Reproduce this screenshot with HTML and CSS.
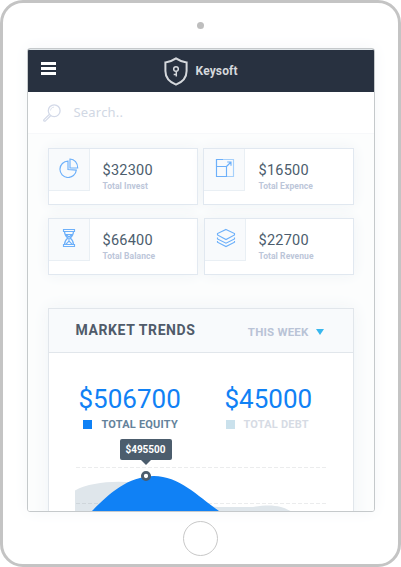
FILE: index.html
```html
<!DOCTYPE html>
<html lang="en">
<head>
<meta charset="utf-8">
<title>Keysoft</title>
<link rel="stylesheet" href="styles.css">
</head>
<body>
<div class="tablet">
  <div class="camera"></div>
  <main class="screen">
    <header class="topbar">
      <div class="menu"><i></i><i></i><i></i></div>
      <div class="brand">
        <svg width="24" height="29" viewBox="0 0 24 29" fill="none" stroke="#d5d8dc" stroke-width="2">
          <path d="M12 1.4C9 3.5 5.5 4.9 1.4 5.4V14c0 6 4 11 10.6 13.6C18.600 25 22.600 20 22.600 14V5.400C18.500 4.900 15 3.500 12 1.400Z"/>
          <circle cx="12" cy="12" r="2.300" stroke-width="1.500"/>
          <path d="M12.300 14.300V19.500M12.300 17.400H9.700" stroke-width="1.500"/>
        </svg>
        <span>Keysoft</span>
      </div>
    </header>
    <div class="search">
      <svg width="18" height="18" viewBox="0 0 18 18" fill="none" stroke="#d3d9e8">
        <circle cx="11.200" cy="6.700" r="5.900" stroke-width="1.300"/>
        <path d="M7.500 6.500C7.700 4.500 9 3.300 11 3.100" stroke-width=".8"/>
        <path d="M6.500 10.200L1 15.600C.2 16.800 1.300 17.700 2.500 16.900L7.900 11.500" stroke-width="1.200"/>
      </svg>
      <span>Search..</span>
    </div>
    <div class="content">
      <section class="stats">
        <article class="stat">
          <div class="tile"><svg width="20" height="20" viewBox="0 0 20 20"><path d="M9 3.100A8.200 8.200 0 1 0 17.300 12.100L9 11.500Z"/><path d="M11 1V10H18.700C18.700 4.900 15.500 1.200 11 1Z"/></svg></div>
          <div class="figures"><b>$32300</b><small>Total Invest</small></div>
        </article>
        <article class="stat expense">
          <div class="tile"><svg width="20" height="20" viewBox="0 0 20 20"><path class="faint" d="M1.500 8.500V1.500H18.500V18.500H12"/><path d="M1.500 8.500H11.500V18.500H1.500ZM1.500 8.500V1.500H8M11.500 8.500L16 4M12.200 4H16V7.800"/></svg></div>
          <div class="figures"><b>$16500</b><small>Total Expence</small></div>
        </article>
        <article class="stat">
          <div class="tile"><svg width="20" height="20" viewBox="0 0 20 20"><path d="M4.500 1.500H15.500V3.500H4.500ZM4.500 16.500H15.500V18.500H4.500ZM5.500 3.500C5.500 7 7 8.500 8.800 10C7 11.500 5.500 13 5.500 16.500M14.500 3.500C14.500 7 13 8.500 11.200 10C13 11.500 14.500 13 14.500 16.500M7 6.500H13L10 9ZM10 10V13M7 16.200L10 13L13 16.200"/></svg></div>
          <div class="figures"><b>$66400</b><small>Total Balance</small></div>
        </article>
        <article class="stat revenue">
          <div class="tile"><svg width="20" height="20" viewBox="0 0 20 20"><path d="M10 1.500L18.500 5.500V7L10 11.500L1.500 7V5.500ZM1.500 9.500V11L10 15.200L18.500 11V9.500M1.500 13V14.200L10 18.500L18.500 14.200V13"/></svg></div>
          <div class="figures"><b>$22700</b><small>Total Revenue</small></div>
        </article>
      </section>
      <section class="trends">
        <div class="trends-head">
          <h2>MARKET TRENDS</h2>
          <div class="period"><span>THIS WEEK</span><i class="caret"></i></div>
        </div>
        <div class="totals">
          <div class="total equity"><strong>$506700</strong><div class="legend"><i></i><span>TOTAL EQUITY</span></div></div>
          <div class="total debt"><strong>$45000</strong><div class="legend"><i></i><span>TOTAL DEBT</span></div></div>
        </div>
        <div class="chart">
          <svg width="252" height="60" viewBox="0 0 252 60">
            <path d="M0 30.500C14 23 36 20.500 58 22.500C90 26 120 47 144 47H178C190 45 198 45 206 47C216 50 225 57 232 60H0Z" fill="#dfe6eb"/>
            <path d="M1 7.500H252M1 43.500H252" stroke="#6f7780" stroke-opacity=".14" stroke-dasharray="4 2"/>
            <path d="M12 56L17 51C34 34 52 16.500 79 16C104 16 124 37 144 51L153 60H10Z" fill="#1081f5"/>
            <circle cx="71" cy="16" r="3.600" fill="#fff" stroke="#4c5d6d" stroke-width="2.900"/>
          </svg>
          <div class="tooltip">$495500</div>
        </div>
      </section>
    </div>
  </main>
  <div class="home"></div>
</div>
</body>
</html>
```
FILE: styles.css
```css
* { box-sizing: border-box; }
html, body { margin: 0; overflow: hidden; }
body { background: #fff; font-family: Roboto, "Liberation Sans", sans-serif; }
.tablet { width: 401px; height: 567px; border: 3px solid #c4c4c4; border-radius: 23px; padding-top: 19px; display: flex; flex-direction: column; align-items: center; background: #fff; }
.camera { width: 7px; height: 7px; border-radius: 50%; background: #bebebe; flex: none; }
.screen { width: 348px; height: 464px; margin-top: 19px; border: 1px solid #c5c9cb; border-radius: 3px; overflow: hidden; flex: none; box-shadow: 0 0 16px #f4f6f8; background: #fff; }
.topbar { height: 43px; border-top: 1px solid #dfe5e8; background: #283140; display: flex; align-items: center; }
.menu { width: 15px; margin: -5px 0 0 13px; display: grid; gap: 2px; }
.menu i { height: 3px; background: #fff; }
.brand { display: flex; align-items: center; margin-left: 108px; gap: 8px; color: #d5d8dc; font-size: 12px; font-weight: 700; letter-spacing: .15px; }
.search { height: 41px; display: flex; align-items: center; padding-left: 15px; gap: 13px; font: 13px "Noto Sans", sans-serif; color: #d1d8e4; letter-spacing: .2px; }
.search span { margin-top: -2px; }
.content { padding: 14px 20px 0; height: 400px; background: #fcfdfd; border-top: 1px solid #f7f8fa; }
.stats { display: grid; grid-template-columns: 150px 151px; gap: 13px 5px; }
.stat { height: 57px; border: 1px solid #e1e8f0; background: #fff; display: flex; box-shadow: 0 0 13px #eff3f6; }
.revenue { margin-left: 1px; }
.tile { width: 41px; height: 42px; border: solid #e9eff4; border-width: 0 1px 1px 0; background: #f8fafc; display: flex; justify-content: center; padding-top: 9px; }
.tile svg { fill: none; stroke: #6db0fa; stroke-width: 1.15; }
.expense .tile svg { margin-left: 2px; }
.revenue .tile svg { margin-left: 2px; }
.tile .faint { stroke: #a6d0fb; }
.figures { margin: 13px 0 0 13px; display: flex; flex-direction: column; }
.figures b { font-size: 14.5px; line-height: 17px; font-weight: 400; color: #4c5d6d; letter-spacing: .25px; }
.figures small { font-size: 8.5px; line-height: 10px; margin-top: 2px; font-weight: 700; color: #bcc6d9; letter-spacing: .08px; }
.expense .figures { margin-left: 14px; }
.revenue .figures { margin-left: 13px; }
.trends { margin-top: 33px; width: 306px; height: 230px; border: 1px solid #e1e6eb; background: #fff; box-shadow: 0 0 16px #eff3f6; }
.trends-head { height: 44px; background: #f8fafc; border-bottom: 1px solid #e1e6eb; padding: 0 29px 0 27px; display: flex; justify-content: space-between; align-items: center; }
h2 { margin: -2px 0 0; font-size: 14px; font-weight: 700; color: #505b6a; letter-spacing: .6px; }
.period { display: flex; align-items: center; gap: 7px; margin-top: 3px; color: #b9c3d6; font-size: 11.5px; font-weight: 700; letter-spacing: .2px; }
.caret { border: 4px solid transparent; border-top: 6px solid #38b7ee; border-bottom: 0; }
.totals { display: grid; grid-template-columns: 146px 1fr; padding: 30px 0 0 30px; }
.total strong { display: block; font-size: 26px; line-height: 32px; font-weight: 400; color: #1081f5; }
.legend { display: flex; align-items: center; gap: 10px; margin: 3px 0 0 4px; font-size: 11px; line-height: 13px; font-weight: 700; color: #64829b; letter-spacing: .2px; }
.legend i { width: 9px; height: 9px; background: #1081f5; }
.debt .legend { margin-left: 1px; gap: 9px; color: #d6dbe4; }
.debt .legend i { background: #cae1ec; }
.chart { position: relative; margin: 29px 0 0 26px; width: 252px; }
.chart svg { display: block; }
.tooltip { position: absolute; left: 45px; top: -21px; width: 52px; height: 21px; border-radius: 2px; background: #4c5d6d; color: #fff; font-size: 10px; font-weight: 700; line-height: 21px; text-align: center; }
.tooltip::after { content: ""; position: absolute; left: 21px; top: 21px; border: 5px solid transparent; border-top-color: #4c5d6d; border-bottom: 0; }
.home { width: 35px; height: 35px; border: 1px solid #c8c8c8; border-radius: 50%; margin-top: 9px; flex: none; }
```
